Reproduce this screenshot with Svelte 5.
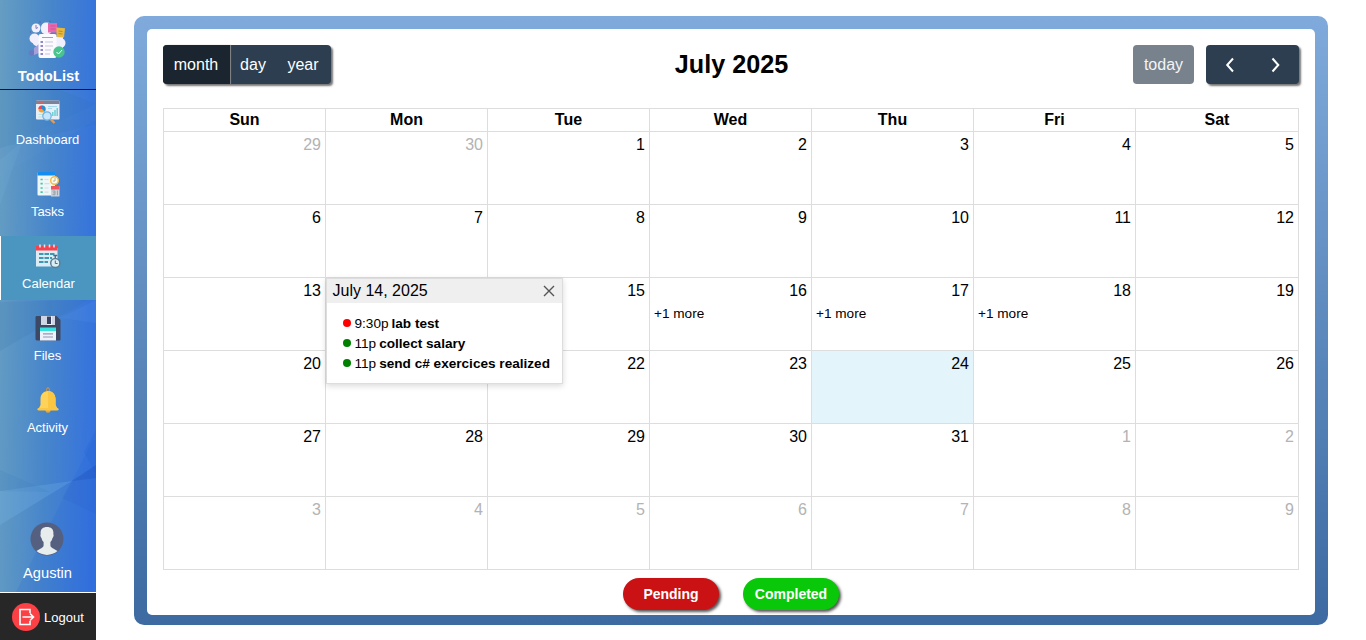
<script>
  const days = ['Sun', 'Mon', 'Tue', 'Wed', 'Thu', 'Fri', 'Sat'];
  const weeks = Array.from({ length: 6 }, (_, w) =>
    Array.from({ length: 7 }, (_, d) => {
      const date = new Date(2025, 5, 29 + w * 7 + d);
      const inMonth = date.getMonth() === 6;
      const n = date.getDate();
      return {
        n,
        other: !inMonth,
        today: inMonth && n === 24,
        more: inMonth && n >= 16 && n <= 18,
        open: inMonth && n === 14,
        covered: inMonth && (n === 14 || n === 21)
      };
    })
  );
  const events = [
    { time: '9:30p', title: 'lab test', color: 'red' },
    { time: '11p', title: 'collect salary', color: 'green' },
    { time: '11p', title: 'send c# exercices realized', color: 'green' }
  ];
  const nav = ['Dashboard', 'Tasks', 'Calendar', 'Files', 'Activity'];
</script>

<div class="app">
  <aside>
    <svg class="facets" viewBox="0 0 96 592" preserveAspectRatio="none">
      <path d="M0 176 L96 120 V104 L0 148z" fill="#6fb0ea" opacity=".06" />
      <path d="M0 90 H60 L96 104 V124 L0 148z" fill="#2c6fa8" opacity=".1" />
      <path d="M0 160 L22 142 L0 205z" fill="#8ac4ee" opacity=".1" />
      <path d="M0 302 L88 300 L0 351z" fill="#2d6ba5" opacity=".13" />
      <path d="M60 318 L96 300 V323z" fill="#5b96ef" opacity=".18" />
      <path d="M96 430 L84 452 L96 474z" fill="#144fc8" opacity=".12" />
      <path d="M0 491 L72 481 L0 525z" fill="#80bdf2" opacity=".22" />
      <path d="M0 470 L50 492 L0 491z" fill="#2f73b4" opacity=".12" />
      <path d="M72 481 L96 465 V478z" fill="#123fa9" opacity=".28" />
      <path d="M72 481 L96 478 V514 L62 498z" fill="#1a4cba" opacity=".1" />
      <path d="M72 481 L16 592 H96 V440 H93z" fill="#1c59df" opacity=".14" />
    </svg>
    <div class="brand">
      <svg width="38" height="40" viewBox="0 0 38 40">
        <g fill="#f1effb"><circle cx="8" cy="8" r="4.500" /><rect x="13" y="2.500" width="11" height="12" rx="5" /><circle cx="6.500" cy="18.500" r="5" /><path d="M4 22l8-4v10l-6-3z" /><circle cx="32.500" cy="23" r="5" /><path d="M28 17h7v11h-7z" /></g>
        <path d="M20 3h9v9.500h-9z" fill="#e968ac" /><path d="M28.500 7.500l8.500.8-1 9.200-7.500-.6z" fill="#e9b83b" />
        <path d="M22.500 6h5m-5 3h5" stroke="#ca559b" /><path d="M30.500 11l4 .5m-4 2l4 .5" stroke="#b58b3d" />
        <path d="M8 5v3.500l2-1" fill="none" stroke="#8579bd" />
        <circle cx="3.500" cy="33" r="2.700" fill="#6b78c6" /><path d="M6 28l5-4v9l-5 2z" fill="#a5a1d8" />
        <circle cx="12" cy="2" r=".7" fill="#5963b3" /><circle cx="22" cy="1.200" r=".7" fill="#5963b3" /><circle cx="2.500" cy="12" r=".7" fill="#5963b3" />
        <rect x="10.500" y="14" width="18" height="24" rx="2" fill="#fbfaff" />
        <path d="M14 17.500h11" stroke="#a79bcd" /><path d="M17 22h8m-8 4h8m-8 4h6m-6 4h5" stroke="#c7c3e2" />
        <path d="M12.500 22h2.500m-2.500 4h2.500m-2.500 4h2.500m-2.500 4h2.500" stroke="#9087cf" stroke-width="2" />
        <circle cx="31" cy="32" r="5.700" fill="#49c48f" /><path d="M28.500 32l2 2 3.500-4" fill="none" stroke="#fff" />
      </svg>
      <b>TodoList</b>
    </div>
    <nav>
      {#each nav as name}
        <a class:active={name === 'Calendar'}>
          <svg width="26" height="26" viewBox="0 0 26 26">
            {#if name === 'Dashboard'}
              <rect x="1" y="1.500" width="23.500" height="19" rx="1" fill="#e6eff8" /><path d="M1 1.500h23.500V5H1z" fill="#7c8297" />
              <path d="M2.500 3.200h1.200m1 0h1.200m1 0h1.200" stroke="#e8645f" /><path d="M3.500 15.500h5m-5 2.500h4" stroke="#b9e4dc" />
              <circle cx="7" cy="10" r="3.600" fill="#f6a336" /><path d="M7 6.400A3.600 3.600 0 003.400 10H7z" fill="#ef4653" /><path d="M7 6.400a3.600 3.600 0 013.600 3.600q0 1.800-1 2.500L7 10z" fill="#248ed7" />
              <path d="M13 7.500h9m-9 2h4" stroke="#a5d7ee" /><path d="M17.800 17v-4m2.200 4v-6m2.200 6V9" stroke="#5cc9cf" stroke-width="1.300" />
              <path d="M16 20.500l3.500 3.500" stroke="#e89b51" stroke-width="2.400" /><circle cx="12" cy="17" r="4.200" fill="#c8e6fb" stroke="#6bb2e2" stroke-width="1.200" />
            {:else if name === 'Tasks'}
              <rect x="2.500" y="1" width="17.500" height="23.500" rx="1" fill="#eff6f8" /><path d="M2.500 1h17.500v3.500H2.500z" fill="#148df2" />
              <path d="M5.500 8.500h2.200m-2.200 4.200h2.200m-2.200 4.300h2.200m-2.200 4.200h2.200" stroke="#3fc9a4" stroke-width="1.700" />
              <path d="M9.500 8.500h4M9.500 12.700h5M9.500 17h4M9.500 21.200h4" stroke="#d3dfe4" stroke-width="1.200" />
              <circle cx="19.500" cy="9.500" r="3.800" fill="#fffbea" stroke="#f5bd45" stroke-width="1.500" /><path d="M20 7v3h-2" fill="none" stroke="#b0aea2" />
              <rect x="16" y="15" width="8.500" height="10.500" fill="#cbd1d7" /><path d="M16 15h8.500v3.500H16z" fill="#ee5362" /><path d="M17.500 20H20v3.700h-2.500m.5-1.800H20M22.500 19.500v4.700" fill="none" stroke="#949ca4" stroke-width=".9" />
            {:else if name === 'Calendar'}
              <path d="M1 5h21.500v18.500H1z" fill="#dcecf4" /><path d="M1 3h21.500v4.500H1z" fill="#f4434e" />
              <path d="M5 1.500v3m4.500-3v3m5-3v3m4.500-3v3" stroke="#dceaf2" stroke-width="1.500" />
              <path d="M4 11h16M4 15h13M4 19h9" stroke="#3e98b5" stroke-width="2" stroke-dasharray="4.500 1" />
              <path d="M20.300 12.500v2.500m-2-2.500h4" stroke="#496b82" stroke-width="1.400" /><circle cx="20.300" cy="20" r="4.600" fill="#d9edf5" stroke="#5b7d92" stroke-width="1.500" /><path d="M20.300 17.500v3h2.300" fill="none" stroke="#496b82" />
            {:else if name === 'Files'}
              <path d="M1.500 1h20l4 4v19.500q0 1-1 1h-22Q.5 25.500.5 24V2.500Q.5 1 1.500 1z" fill="#3d4865" />
              <path d="M6 1h14v9H6z" fill="#cfd5e5" /><path d="M12 1h5v9h-5z" fill="#eef0f7" /><path d="M12 1.500h4v7.500h-4z" fill="#35415e" />
              <path d="M5 13h16v12.500H5z" fill="#edf1fb" /><path d="M5 12.500h16V16H5z" fill="#35e2df" /><path d="M8 18.800h10M8 22h10" stroke="#9198b2" stroke-width="1.200" />
            {:else}
              <ellipse cx="13" cy="2.700" rx="1.400" ry="2" fill="none" stroke="#d9993d" /><circle cx="13" cy="23.300" r="2.500" fill="#eaa737" />
              <path d="M13 4C8 4 5.500 8 5.500 12v6l-2 4h19l-2-4v-6c0-4-2.500-8-7.500-8z" fill="#ffd35a" /><path d="M13 4c5 0 7.500 4 7.500 8v6l2 4H13z" fill="#fbc742" /><rect x="2.500" y="21" width="21" height="2.600" rx="1.300" fill="#fbc742" />
            {/if}
          </svg>
          <span>{name}</span>
        </a>
      {/each}
    </nav>
    <div class="user">
      <svg width="34" height="34" viewBox="0 0 34 34">
        <circle cx="17" cy="17" r="16.500" fill="#556080" />
        <path d="M17 5c-4.500 0-7 2.600-6.300 7.200-.8 1 0 3.200.8 3.800.4 2 1.200 3 2.100 4v3.500c0 2-3.600 3.200-7.100 5.600a16.300 16.300 0 0021 0c-3.500-2.400-7.100-3.600-7.100-5.600V20c.9-1 1.700-2 2.100-4 .8-.6 1.600-2.800.8-3.800C24 7.600 21.500 5 17 5z" fill="#e7eced" />
      </svg>
      <span>Agustin</span>
    </div>
    <div class="logout">
      <svg width="28" height="28" viewBox="0 0 28 28"><circle cx="14" cy="14" r="14" fill="#fb4145" /><path d="M18 10V6.500H8v15h10V18M10.500 14h11m-3.500-3.500l3.500 3.500-3.500 3.500" fill="none" stroke="#fff" stroke-width="1.600" /></svg>
      <span>Logout</span>
    </div>
  </aside>

  <main>
    <section class="panel">
      <header>
        <div class="group views"><button class="on">month</button><button class="mid">day</button><button class="last">year</button></div>
        <h2>July 2025</h2>
        <div class="right">
          <button class="today-btn">today</button>
          <div class="group arrows">
            <button aria-label="prev"><svg width="16" height="16" viewBox="0 0 16 16"><path d="M11 1.500L5.200 8l5.800 6.500" /></svg></button>
            <button aria-label="next"><svg width="16" height="16" viewBox="0 0 16 16"><path d="M4.500 1.500L10.300 8l-5.800 6.500" /></svg></button>
          </div>
        </div>
      </header>
      <div class="grid">
        {#each days as d}<div class="dow">{d}</div>{/each}
        {#each weeks as week}
          {#each week as c}
            <div class="cell" class:other={c.other} class:today={c.today}>
              {#if !c.covered}<div class="num">{c.n}</div>{/if}
              {#if c.more}<div class="more">+1 more</div>{/if}
              {#if c.open}
                <div class="popover">
                  <div class="pop-head"><span>July 14, 2025</span>
                    <svg width="12" height="12" viewBox="0 0 12 12"><path d="M1 1l10 10M11 1L1 11" stroke="#555" stroke-width="1.400" /></svg>
                  </div>
                  <div class="pop-body">
                    {#each events as e}
                      <div class="event"><i class={e.color}></i><span>{e.time}</span><b>{e.title}</b></div>
                    {/each}
                  </div>
                </div>
              {/if}
            </div>
          {/each}
        {/each}
      </div>
      <footer><button class="pending">Pending</button><button class="completed">Completed</button></footer>
    </section>
  </main>
</div>

<style>
  :global(body) { margin: 0; background: #fff; overflow: hidden; }
  * { box-sizing: border-box; }
  .app { display: flex; height: 640px; font-family: "Liberation Sans", Arial, sans-serif; font-size: 16px; color: #000; }
  button { font-family: inherit; border: 0; margin: 0; padding: 0; color: #fff; flex: none; }
  svg { display: block; flex: none; }
  aside { position: relative; isolation: isolate; width: 96px; flex: none; display: flex; flex-direction: column; color: #fff; background: linear-gradient(91deg, #659dc2 0%, #4785cb 50%, #3370e0 100%); }
  .facets { position: absolute; z-index: -1; left: 0; top: 0; width: 96px; height: 592px; }
  .brand { height: 90px; padding: 20px 1px 0 0; border-bottom: 1px solid #00089c; display: flex; flex-direction: column; align-items: center; }
  .brand svg { margin-right: 1px; }
  .brand b { font-size: 14.800px; line-height: 17px; margin-top: 8px; padding-left: 2px; }
  nav { display: flex; flex-direction: column; gap: 8px; padding-top: 2px; }
  nav a { height: 64px; padding: 7px 1px 0 0; display: flex; flex-direction: column; align-items: center; font-size: 13px; }
  nav span { line-height: 15px; margin-top: 7px; }
  nav a.active { background: #4b96c1; border-left: 1px solid #fff; padding-right: 0; }
  nav a.active svg { margin-right: 2px; }
  .user { margin-top: auto; height: 70px; padding-right: 1px; display: flex; flex-direction: column; align-items: center; font-size: 14.700px; }
  .user svg { margin-right: 1px; }
  .user span { line-height: 17px; margin-top: 9px; }
  .logout { height: 48px; border-top: 1px solid #fff; background: #272727; display: flex; align-items: center; padding: 1px 0 0 12px; gap: 4px; font-size: 13px; }
  main { flex: 1; padding: 16px 38px 15px; }
  .panel { height: 609px; border-radius: 10px; background: linear-gradient(#7faadb, #3c6aa1); padding: 13px 13px 10px; display: grid; grid-template-rows: 79px 462px 45px; }
  header, .grid, footer { background: #fff; }
  header { border-radius: 5px 5px 0 0; padding: 16px 16px 0 16px; display: grid; grid-template-columns: 1fr auto 1fr; align-items: start; }
  .group { display: flex; width: max-content; height: 39px; border-radius: 4px; background: #2c3e50; box-shadow: 2px 2px 2px #777; }
  .group button { background: transparent; font-size: 16px; }
  .group .on { width: 67px; padding-right: 1px; background: #1a252f; border-radius: 4px 0 0 4px; box-shadow: 1px 0 1px #888; }
  .group .mid { width: 45px; padding-left: 1px; }
  .group .last { width: 56px; }
  h2 { margin: 5px 0 0; padding-left: 1px; font-size: 25.200px; line-height: 28px; }
  .right { display: flex; justify-content: flex-end; gap: 12px; }
  .today-btn { width: 61px; height: 39px; border-radius: 4px; background: #77828d; font-size: 16px; color: #f3f4f5; }
  .arrows button { width: 47px; display: grid; place-items: center; }
  .arrows button + button { width: 46px; }
  .arrows path { fill: none; stroke: #fff; stroke-width: 2; }
  .grid { padding: 0 16px; display: grid; grid-template-columns: 163px repeat(5, 162px) 163px; grid-template-rows: 24px repeat(6, 73px); }
  .dow, .cell { border-right: 1px solid #ddd; border-bottom: 1px solid #ddd; }
  .dow { border-top: 1px solid #ddd; text-align: center; font-weight: 700; line-height: 22px; }
  .dow:nth-child(7n + 1), .cell:nth-child(7n + 1) { border-left: 1px solid #ddd; }
  .cell { position: relative; padding: 4px 4px 0 4px; }
  .num { text-align: right; line-height: 18px; }
  .other .num { color: #b3b3b3; }
  .today { background: #e3f4fa; }
  .more { font-size: 13.600px; line-height: 16px; margin-top: 6px; }
  .popover { position: absolute; z-index: 2; left: 0; top: 0; width: 237px; height: 106px; background: #fff; border: 1px solid #ddd; box-shadow: 0 2px 6px rgba(0, 0, 0, .15); }
  .pop-head { height: 24px; background: #efefef; padding: 0 7px 0 5.500px; display: flex; align-items: center; justify-content: space-between; }
  .pop-body { padding: 10px 0 0 16px; }
  .event { height: 20px; display: flex; align-items: center; font-size: 13.600px; white-space: nowrap; }
  .event i { width: 8px; height: 8px; border-radius: 50%; margin-right: 3.500px; }
  .event span { margin-right: 3px; }
  .red { background: red; }
  .green { background: green; }
  footer { border-radius: 0 0 5px 5px; padding: 8px 0 0; display: flex; justify-content: center; gap: 24px; }
  footer button { width: 96px; height: 32px; border-radius: 16px; font-size: 14px; font-weight: 700; box-shadow: 2px 2px 3px #555; }
  .pending { background: #ca1114; }
  .completed { background: #09c809; }
</style>
